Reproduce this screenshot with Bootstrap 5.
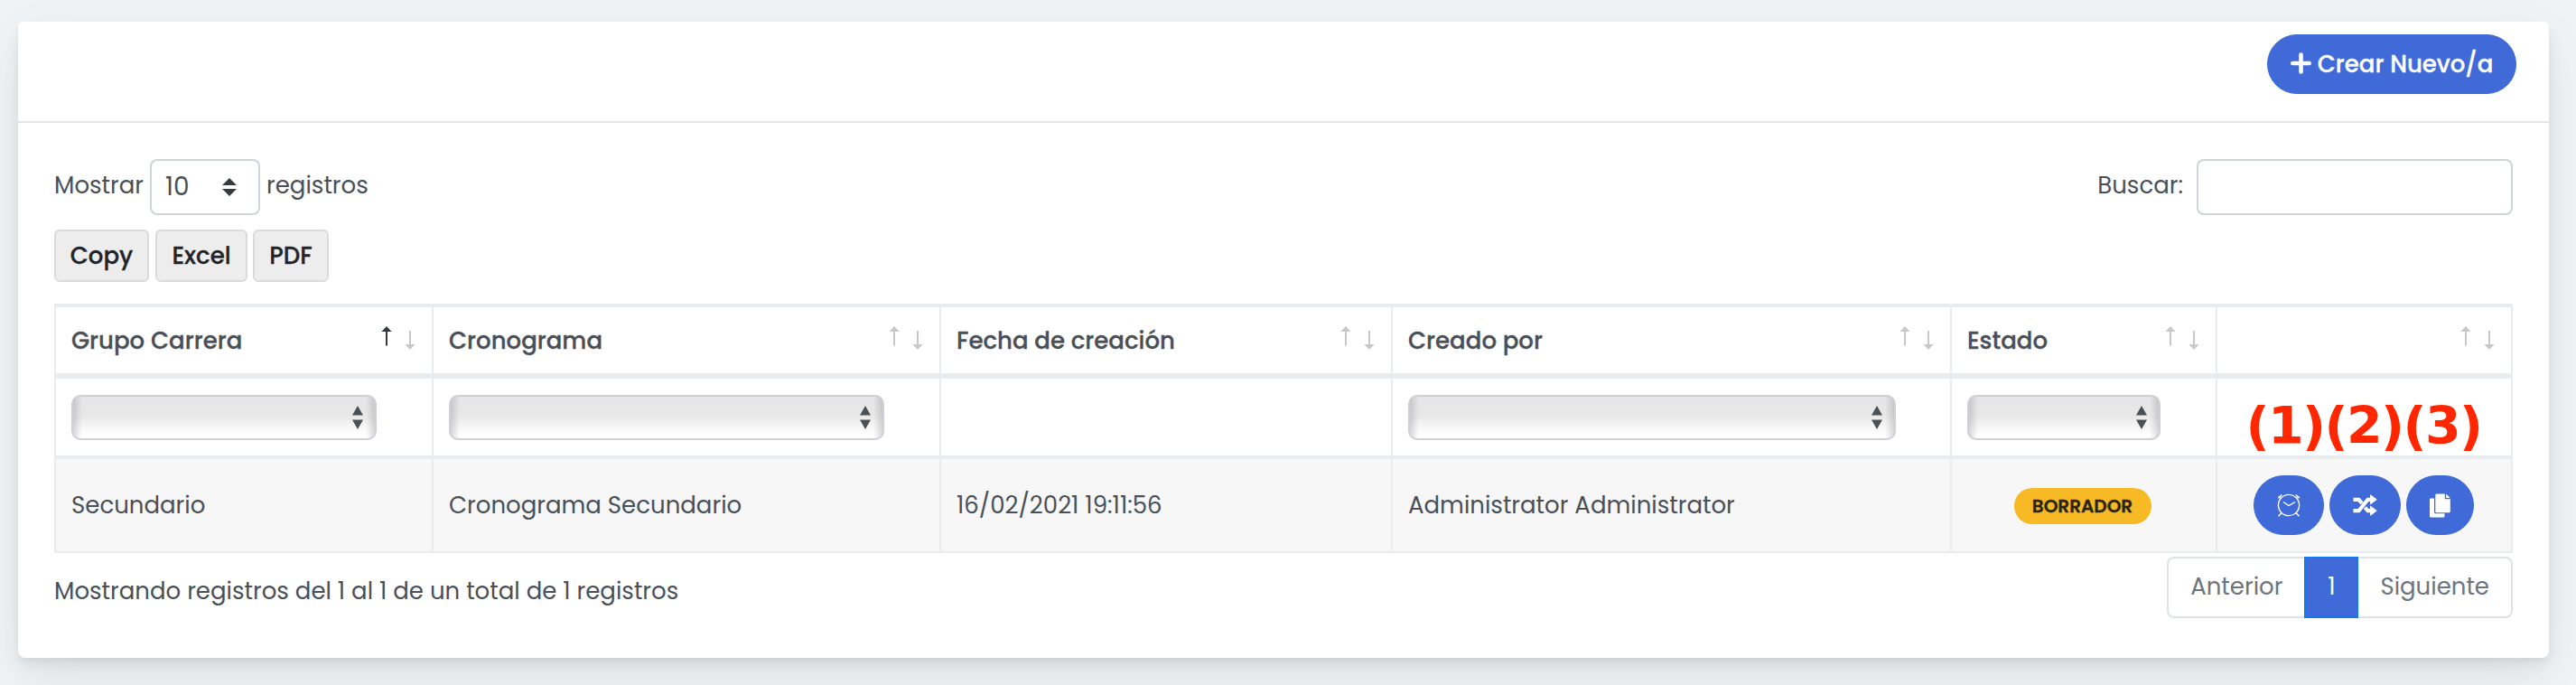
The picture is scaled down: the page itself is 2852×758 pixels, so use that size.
<!DOCTYPE html>
<html lang="es">
<head>
  <meta charset="UTF-8">
  <title>Cronogramas</title>
  <meta name="viewport" content="width=device-width, initial-scale=1.0"/>
  <!-- Bootstrap 5 CSS -->
  <link href="https://cdn.jsdelivr.net/npm/bootstrap@5.3.3/dist/css/bootstrap.min.css" rel="stylesheet"/>
  <style>
    body {
      min-height: 100vh;
      padding: 24px 30px 30px 20px;
      font-family: Poppins, Inter, "Open Sans", sans-serif;
      font-size: 26px;
      line-height: 40px;
      color: #495057;
      background: #f0f3f5;
    }
    .main-card {
      height: 704px;
      border: 0;
      border-radius: 8px;
      color: #495057;
      box-shadow: 0 15px 70px rgba(4, 9, 20, .04), 0 30px 45px rgba(4, 9, 20, .03),
                  0 8px 17px rgba(4, 9, 20, .06), 0 4px 6px rgba(4, 9, 20, .03);
    }
    .main-card .card-header {
      height: 112px;
      padding: 14px 36px 0 0;
      background: #fff;
      border-bottom: 2px solid #e2e5e9;
    }
    .main-card .card-body { padding: 40px 40px 0; }

    .btn-main {
      --bs-btn-bg: #3f6ad8;
      --bs-btn-border-color: #3f6ad8;
      --bs-btn-color: #fff;
      --bs-btn-hover-bg: #3158c4;
      --bs-btn-hover-color: #fff;
      height: 66px;
      padding: 0;
    }
    .btn-create { width: 276px; font-size: 26px; font-weight: 500; -webkit-text-stroke: .3px; }
    .btn-create svg { margin-right: 7px; margin-top: -2px; }

    .length-select, .search-input {
      height: 62px;
      border: 2px solid #ced4da;
      border-radius: 8px;
      background-color: #fff;
    }
    .length-select { width: 122px; padding: 0 24px 0 15px; margin: 0 7px 0 7px; }
    .length-select span { font-size: 28px; }
    .search-input { width: 350px; margin-left: 15px; }
    .bar-text { margin-top: -5px; }

    .btn-export {
      height: 58px;
      padding: 0;
      border: 2px solid #dadada;
      border-radius: 6px;
      background: #ededed;
      color: #212529;
      font-size: 26px;
      font-weight: 500;
      -webkit-text-stroke: .3px;
    }

    .crono-table { width: 2722px; table-layout: fixed; border-collapse: separate; border-spacing: 0; }
    .crono-table th, .crono-table td {
      padding: 0 18px 0 17px;
      border: 0 solid #e9ecef;
      border-right-width: 2px;
      vertical-align: middle;
    }
    .crono-table th:first-child, .crono-table td:first-child { border-left-width: 2px; }
    .head-row th { height: 83px; border-top-width: 4px; border-bottom-width: 6px; font-weight: 500; -webkit-text-stroke: .3px; }
    .filter-row th { height: 89px; border-bottom-width: 4px; }
    .data-row td { height: 104px; border-bottom-width: 2px; background: #f7f7f7; }
    .sort-icons { margin: -6px 0 0 0; }

    .filter-select {
      height: 50px;
      padding-right: 13px;
      border: 2px solid #ced0d6;
      border-radius: 10px;
      background: linear-gradient(90deg, rgba(120, 120, 125, .28), transparent 10px, transparent calc(100% - 10px), rgba(120, 120, 125, .28)),
                  linear-gradient(#e5e5e5, #e8e8e8 48%, #f0f0f0 60%, #fff 92%);
    }
    .w-group { width: 338px; }
    .w-crono { width: 482px; }
    .w-user { width: 540px; }
    .w-state { width: 214px; }

    .note-mark {
      display: block;
      font: bold 57px/60px "DejaVu Sans", sans-serif;
      letter-spacing: -1.6px;
      color: #ff2600;
      white-space: nowrap;
      margin: 19px -4px 0;
      text-align: center;
    }
    .state-pill {
      width: 152px;
      height: 40px;
      padding: 0;
      margin-right: 2px;
      line-height: 40px;
      font-size: 20px;
      font-weight: 600;
      background: #f7b924;
      color: #2b2412;
      -webkit-text-stroke: .3px;
    }

    .pagination .page-link {
      height: 68px;
      padding: 0 24px;
      line-height: 63px;
      border: 2px solid #dee2e6;
      font-size: 26px;
      color: #6c757d;
      background: #fff;
    }
    .pagination .page-item:not(:first-child) .page-link { margin-left: -2px; }
    .pagination .page-item:first-child .page-link { border-radius: 8px 0 0 8px; }
    .pagination .page-item:last-child .page-link { border-radius: 0 8px 8px 0; }
    .pagination .active .page-link { width: 60px; padding: 0; text-align: center; color: #fff; background: #3f6ad8; border-color: #1278f0; }
    .table-info-text { margin-top: 18px; }
  </style>
</head>
<body>
  <!-- Icons shared by the table -->
  <svg class="d-none">
    <symbol id="arrow-up" viewBox="0 0 12 22"><path d="M6 0l5.600 6H7V21.500H5V6H.4z" fill="currentColor"/></symbol>
    <symbol id="arrow-down" viewBox="0 0 12 22"><path d="M6 22l5.600-6H7V1H5v15H.4z" fill="currentColor"/></symbol>
    <symbol id="updown" viewBox="0 0 12 26"><path d="M6 0l6 10.500H0zM6 26l6-10.500H0z" fill="#495057"/></symbol>
  </svg>

  <div class="card main-card">
    <div class="card-header d-flex justify-content-end align-items-start">
      <button class="btn btn-main btn-create rounded-pill d-flex align-items-center justify-content-center">
        <svg width="23" height="24" viewBox="0 0 23 24"><path d="M11.500 2.500v19M2.300 12h18.400" stroke="#fff" stroke-width="4.600" stroke-linecap="round"/></svg>Crear Nuevo/a
      </button>
    </div>

    <div class="card-body">
      <div class="d-flex justify-content-between">
        <div class="d-flex align-items-center">
          <span class="bar-text">Mostrar</span>
          <div class="length-select d-flex align-items-center justify-content-between">
            <span>10</span>
            <svg width="16" height="20" viewBox="0 0 16 20"><path d="M8 0l8 8H0zM8 20l8-8H0z" fill="#343a40"/></svg>
          </div>
          <span class="bar-text">registros</span>
        </div>
        <div class="d-flex align-items-center">
          <label class="bar-text" for="buscar">Buscar:</label>
          <input type="search" class="search-input" id="buscar">
        </div>
      </div>

      <div class="d-flex mt-3 mb-4">
        <button class="btn-export" style="width: 105px; margin-right: 7px">Copy</button>
        <button class="btn-export" style="width: 102px; margin-right: 6px">Excel</button>
        <button class="btn-export" style="width: 84px">PDF</button>
      </div>

      <table class="crono-table">
        <colgroup>
          <col style="width: 420px"><col style="width: 562px"><col style="width: 500px">
          <col style="width: 619px"><col style="width: 294px"><col style="width: 327px">
        </colgroup>
        <thead>
          <tr class="head-row" id="headRow"></tr>
          <tr class="filter-row">
            <th><div class="filter-select w-group d-flex align-items-center justify-content-end"><svg width="12" height="26"><use href="#updown"/></svg></div></th>
            <th><div class="filter-select w-crono d-flex align-items-center justify-content-end"><svg width="12" height="26"><use href="#updown"/></svg></div></th>
            <th></th>
            <th><div class="filter-select w-user d-flex align-items-center justify-content-end"><svg width="12" height="26"><use href="#updown"/></svg></div></th>
            <th><div class="filter-select w-state d-flex align-items-center justify-content-end"><svg width="12" height="26"><use href="#updown"/></svg></div></th>
            <th><span class="note-mark">(1)(2)(3)</span></th>
          </tr>
        </thead>
        <tbody>
          <tr class="data-row">
            <td>Secundario</td>
            <td>Cronograma Secundario</td>
            <td>16/02/2021 19:11:56</td>
            <td>Administrator Administrator</td>
            <td class="text-center"><span class="badge rounded-pill state-pill align-middle">BORRADOR</span></td>
            <td>
              <div class="d-flex justify-content-center" style="gap: 6px">
                <button class="btn btn-main rounded-pill" style="width: 78px">
                  <svg width="26" height="26" viewBox="0 0 26 26" fill="none" stroke="#fff" stroke-width="1.400"><circle cx="13" cy="13" r="11.600"/><path d="M7 9.500l6 4 7-4M1.200 5.200l4-3.600M24.800 5.200l-4-3.600M1.800 3.200l1.700 1.800M24.200 3.200l-1.700 1.800M5 21.500l-3.500 3.800M21 21.500l3.500 3.800"/></svg>
                </button>
                <button class="btn btn-main rounded-pill" style="width: 79px">
                  <svg width="27" height="24" viewBox="0 0 27 24"><path d="M.5 5.800h6L10 9.800M13.500 14.500l3 3.700H20" fill="none" stroke="#fff" stroke-width="4.200"/><path d="M.5 18.200h6L16.500 5.800H20" fill="none" stroke="#fff" stroke-width="4.200"/><path d="M19.500.8v10l6.700-5zM19.500 13.200v10l6.700-5z" fill="#fff" stroke="#fff" stroke-linejoin="round"/></svg>
                </button>
                <button class="btn btn-main rounded-pill" style="width: 75px">
                  <svg width="23" height="27" viewBox="0 0 23 27" fill="#fff"><path d="M1.300 5.500H5V20.500q0 1.800 1.800 1.800H16.500V25.300q0 1.200-1.200 1.200H1.300Q0 26.500 0 25.300V6.700Q0 5.500 1.300 5.500z"/><path d="M7.500.5H16.800V6.200h6V20q0 1.200-1.200 1.200H7.500q-1.200 0-1.200-1.200V1.700Q6.300.5 7.500.5z"/><path d="M18.200.5l4.600 4.400h-4.600z"/></svg>
                </button>
              </div>
            </td>
          </tr>
        </tbody>
      </table>

      <div class="d-flex justify-content-between mt-1">
        <div class="table-info-text">Mostrando registros del 1 al 1 de un total de 1 registros</div>
        <ul class="pagination mb-0">
          <li class="page-item disabled"><a class="page-link" href="#">Anterior</a></li>
          <li class="page-item active"><a class="page-link" href="#">1</a></li>
          <li class="page-item disabled"><a class="page-link" href="#">Siguiente</a></li>
        </ul>
      </div>
    </div>
  </div>

  <script>
    const columns = ["Grupo Carrera", "Cronograma", "Fecha de creación", "Creado por", "Estado", ""];

    // first column is the one sorted ascending
    document.getElementById("headRow").innerHTML = columns.map((name, i) => `
      <th>
        <div class="d-flex justify-content-between align-items-center">
          <span>${name}</span>
          <span class="sort-icons d-flex" style="gap: 14px; color: #c6c9cc">
            <svg width="12" height="22" style="color: ${i === 0 ? "#343a40" : "#c6c9cc"}"><use href="#arrow-up"/></svg>
            <svg width="12" height="22" class="mt-1"><use href="#arrow-down"/></svg>
          </span>
        </div>
      </th>`).join("");
  </script>

  <!-- Bootstrap JS -->
  <script src="https://cdn.jsdelivr.net/npm/bootstrap@5.3.3/dist/js/bootstrap.bundle.min.js"></script>
</body>
</html>
